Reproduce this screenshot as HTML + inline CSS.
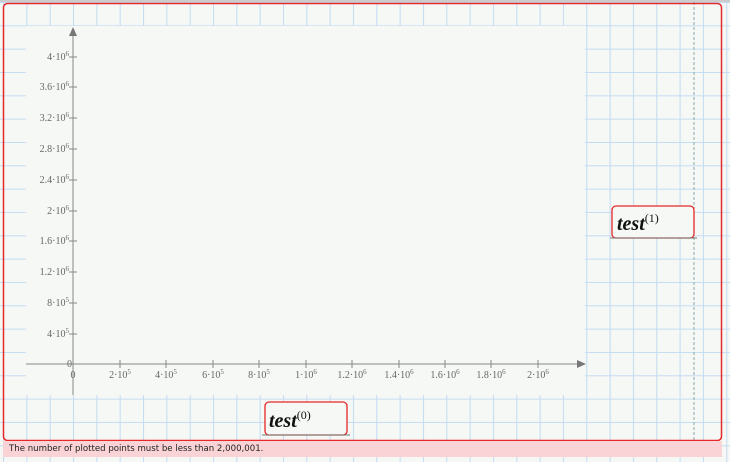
<!DOCTYPE html>
<html><head><style>
html,body{margin:0;padding:0;background:#f5f8f5;width:730px;height:462px;overflow:hidden}
svg{position:absolute;left:0;top:0}
.t{font-family:"Liberation Serif",serif;font-size:10px;fill:#666}
.s{font-size:7px}
.err{position:absolute;left:3px;top:441px;width:719px;height:16px;background:#f9d3d5;font-family:"DejaVu Sans","Liberation Sans",sans-serif;font-size:8.6px;color:#222;line-height:16px;text-indent:6px}
.lab{font-family:"Liberation Serif",serif;font-style:italic;font-weight:bold;font-size:20px;fill:#111}
.sup{font-family:"Liberation Serif",serif;font-size:12px;font-weight:normal;font-style:normal}
</style></head><body>
<svg width="730" height="462" xmlns="http://www.w3.org/2000/svg">
<defs><pattern id="g" x="3" y="2" width="23.33" height="23.33" patternUnits="userSpaceOnUse">
<path d="M0 0.5H23.33M0.5 0V23.33" stroke="#c4dcf2" stroke-width="1.1" fill="none"/></pattern></defs>
<rect width="730" height="462" fill="#f5f8f5"/>
<rect width="730" height="462" fill="url(#g)"/>
<rect x="0" y="0" width="730" height="2" fill="#ccc"/>
<rect x="26" y="26" width="559" height="369" fill="#f5f8f5"/>
<line x1="694" y1="2" x2="694" y2="441" stroke="#8aa" stroke-dasharray="3,2"/>
<rect x="3.5" y="3.5" width="718" height="437" rx="4" fill="none" stroke="#e52828" stroke-width="1.5"/>
<g stroke="#888" stroke-width="1">
<line x1="73" y1="32" x2="73" y2="395"/>
<line x1="26" y1="364" x2="580" y2="364"/>
</g>
<path d="M69 36 L73 27 L77 36Z" fill="#777"/>
<path d="M577 360 L586 364 L577 368Z" fill="#777"/>
<g stroke="#888">
<path d="M69 57h8M69 87h8M69 118h8M69 149h8M69 180h8M69 211h8M69 241h8M69 272h8M69 303h8M69 334h8M69 364h8"/>
<path d="M120 360v8M166 360v8M213 360v8M259 360v8M306 360v8M352 360v8M399 360v8M445 360v8M491 360v8M538 360v8"/>
</g>
<g class="t" text-anchor="end">
<text x="69" y="60">4·10<tspan class="s" dy="-4">6</tspan></text>
<text x="69" y="90">3.6·10<tspan class="s" dy="-4">6</tspan></text>
<text x="69" y="121">3.2·10<tspan class="s" dy="-4">6</tspan></text>
<text x="69" y="152">2.8·10<tspan class="s" dy="-4">6</tspan></text>
<text x="69" y="183">2.4·10<tspan class="s" dy="-4">6</tspan></text>
<text x="69" y="214">2·10<tspan class="s" dy="-4">6</tspan></text>
<text x="69" y="244">1.6·10<tspan class="s" dy="-4">6</tspan></text>
<text x="69" y="275">1.2·10<tspan class="s" dy="-4">6</tspan></text>
<text x="69" y="306">8·10<tspan class="s" dy="-4">5</tspan></text>
<text x="69" y="337">4·10<tspan class="s" dy="-4">5</tspan></text>
<text x="72" y="367">0</text>
</g>
<g class="t" text-anchor="middle">
<text x="73" y="378">0</text>
<text x="120" y="378">2·10<tspan class="s" dy="-4">5</tspan></text>
<text x="166" y="378">4·10<tspan class="s" dy="-4">5</tspan></text>
<text x="213" y="378">6·10<tspan class="s" dy="-4">5</tspan></text>
<text x="259" y="378">8·10<tspan class="s" dy="-4">5</tspan></text>
<text x="306" y="378">1·10<tspan class="s" dy="-4">6</tspan></text>
<text x="352" y="378">1.2·10<tspan class="s" dy="-4">6</tspan></text>
<text x="399" y="378">1.4·10<tspan class="s" dy="-4">6</tspan></text>
<text x="445" y="378">1.6·10<tspan class="s" dy="-4">6</tspan></text>
<text x="491" y="378">1.8·10<tspan class="s" dy="-4">6</tspan></text>
<text x="538" y="378">2·10<tspan class="s" dy="-4">6</tspan></text>
</g>
<rect x="265" y="402" width="82" height="33" rx="4" fill="#f5f8f5" stroke="#e52828" stroke-width="1.3"/>
<line x1="262" y1="435" x2="350" y2="435" stroke="#777"/>
<text class="lab" x="269" y="427">test<tspan class="sup" dy="-8">(0)</tspan></text>
<rect x="612" y="206" width="82" height="32" rx="4" fill="#f5f8f5" stroke="#e52828" stroke-width="1.3"/>
<line x1="610" y1="238" x2="697" y2="238" stroke="#777"/>
<text class="lab" x="617" y="230">test<tspan class="sup" dy="-8">(1)</tspan></text>
</svg>
<div class="err">The number of plotted points must be less than 2,000,001.</div>
</body></html>
